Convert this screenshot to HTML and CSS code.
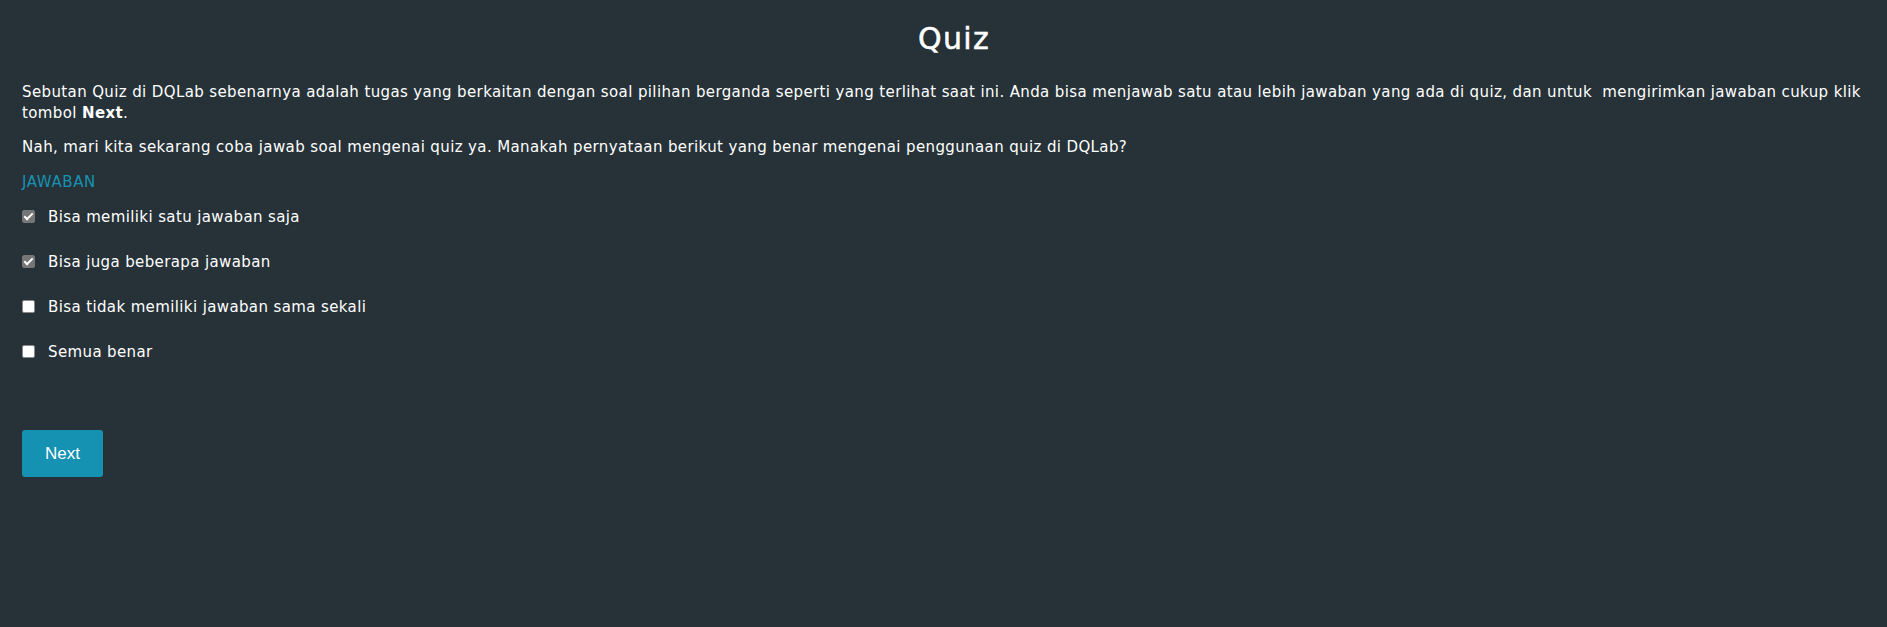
FILE: index.html
```html
<!DOCTYPE html>
<html lang="id">
<head>
<meta charset="utf-8">
<title>Quiz</title>
<link rel="stylesheet" href="styles.css">
</head>
<body>
<main class="quiz">
  <h1 class="quiz-title">Quiz</h1>
  <p class="quiz-text">Sebutan Quiz di DQLab sebenarnya adalah tugas yang berkaitan dengan soal pilihan berganda seperti yang terlihat saat ini. Anda bisa menjawab satu atau lebih jawaban yang ada di quiz, dan untuk&nbsp; mengirimkan jawaban cukup klik tombol <strong>Next</strong>.</p>
  <p class="quiz-text">Nah, mari kita sekarang coba jawab soal mengenai quiz ya. Manakah pernyataan berikut yang benar mengenai penggunaan quiz di DQLab?</p>
  <div class="answer-label">JAWABAN</div>
  <ul class="options">
    <li class="option"><label><input type="checkbox" class="check" checked><span>Bisa memiliki satu jawaban saja</span></label></li>
    <li class="option"><label><input type="checkbox" class="check" checked><span>Bisa juga beberapa jawaban</span></label></li>
    <li class="option"><label><input type="checkbox" class="check"><span>Bisa tidak memiliki jawaban sama sekali</span></label></li>
    <li class="option"><label><input type="checkbox" class="check"><span>Semua benar</span></label></li>
  </ul>
  <button class="btn-next" type="button">Next</button>
</main>
</body>
</html>
```

FILE: styles.css
```css
html, body {
  margin: 0;
  padding: 0;
  background: #263238;
  color: #ffffff;
  font-family: "DejaVu Sans", "Noto Sans", sans-serif;
}

.quiz {
  padding: 0 22px;
}

.quiz-title {
  margin: 0;
  padding: 18px 0 0 21px;
  text-align: center;
  font-size: 30px;
  font-weight: 400;
  letter-spacing: 1.3px;
  line-height: 42px;
  -webkit-text-stroke: 0.5px #ffffff;
}

.quiz-text {
  margin: 22px 0 13px;
  font-size: 15px;
  line-height: 21px;
  letter-spacing: 0.38px;
}

.quiz-text + .quiz-text {
  margin-top: 0;
  margin-bottom: 14px;
}

.quiz-text strong {
  font-weight: 700;
}

.answer-label {
  color: #1791b1;
  font-size: 15px;
  line-height: 21px;
  letter-spacing: 0.6px;
}

.options {
  list-style: none;
  margin: 1px 0 0;
  padding: 0;
}

.option label {
  display: flex;
  align-items: center;
  height: 45px;
  gap: 13px;
  font-size: 15px;
  letter-spacing: 0.38px;
}

.check {
  appearance: none;
  margin: 0;
  flex: none;
  width: 13px;
  height: 13px;
  border: 1px solid #8a8a8a;
  border-radius: 2px;
  background: #fff;
  position: relative;
}

.check:checked {
  background: #767676;
  border-color: #767676;
}

.check:checked::after {
  content: "";
  position: absolute;
  left: 3px;
  top: 0px;
  width: 3px;
  height: 7px;
  border: solid #fff;
  border-width: 0 2px 2px 0;
  transform: rotate(45deg);
}

.btn-next {
  display: block;
  margin-top: 56px;
  width: 81px;
  height: 47px;
  padding: 0;
  border: 0;
  border-radius: 3px;
  background: #1591b2;
  color: #fff;
  font-family: "Liberation Sans", Arial, sans-serif;
  font-size: 17px;
}
```
